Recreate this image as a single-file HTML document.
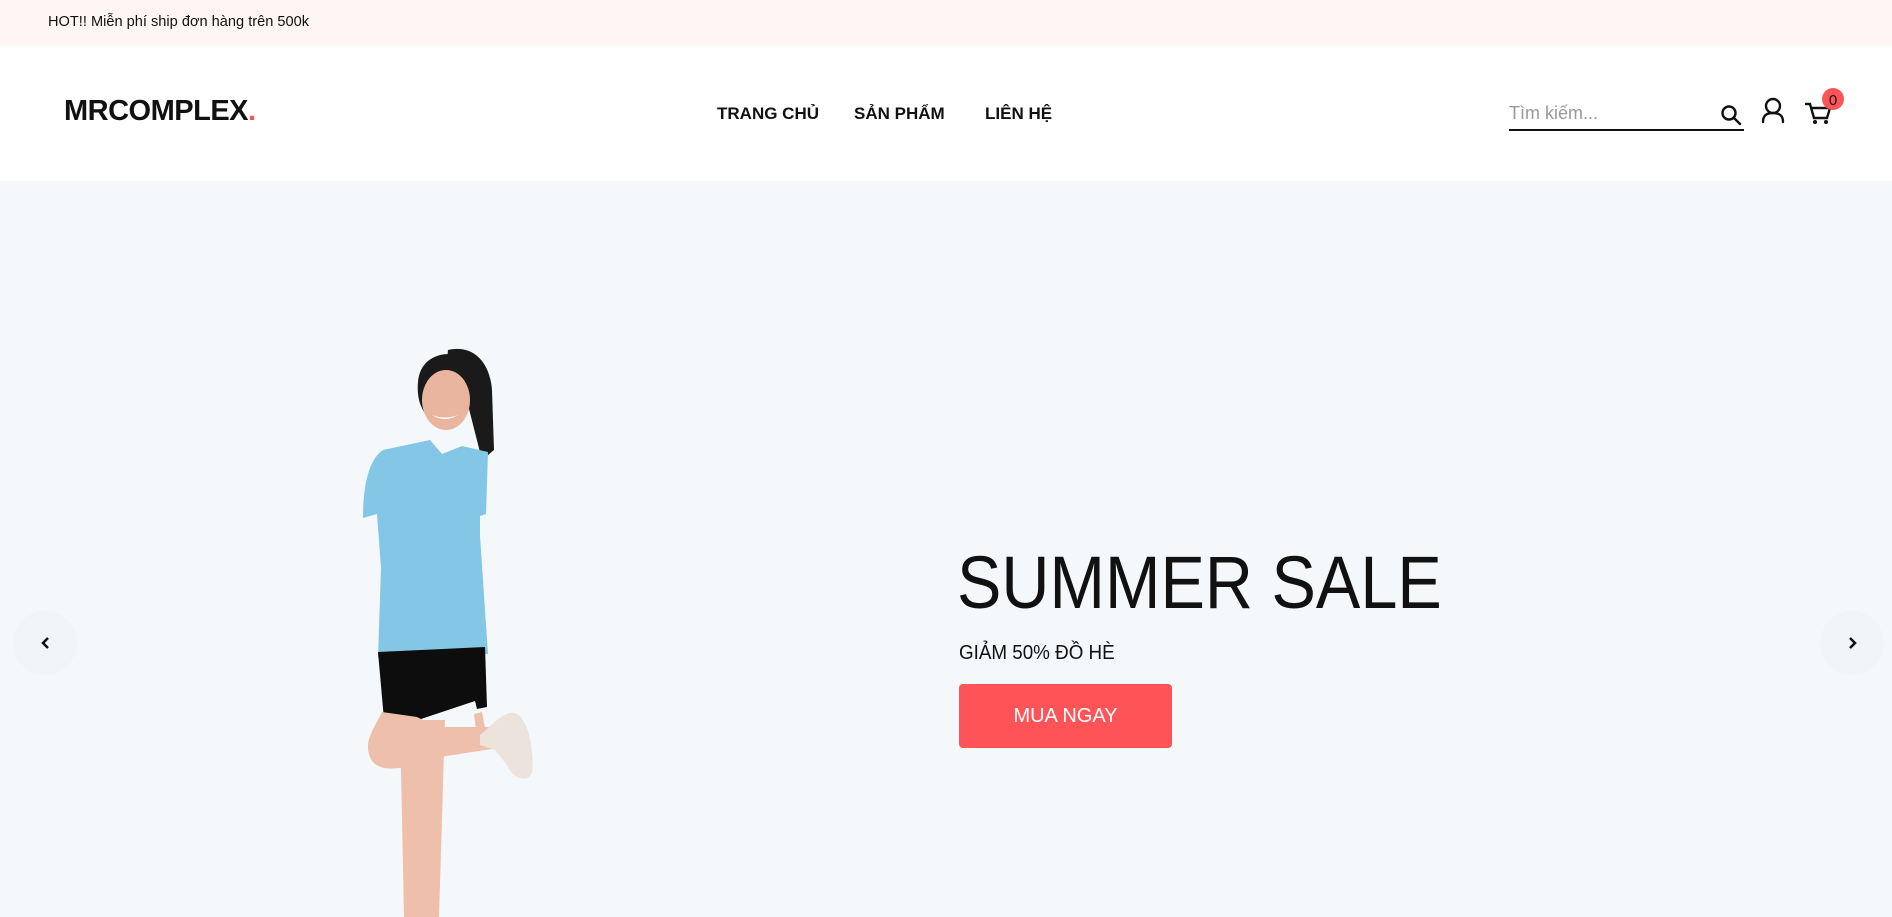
<!DOCTYPE html>
<html><head><meta charset="utf-8">
<style>
*{margin:0;padding:0;box-sizing:border-box}
body{width:1892px;height:917px;overflow:hidden;font-family:"Liberation Sans",sans-serif;background:#f4f8fa;position:relative}
.top{position:absolute;left:0;top:0;width:1892px;height:46px;background:#fff5f4;font-size:14.6px;line-height:44px;padding-left:48px;color:#111}
.hdr{position:absolute;left:0;top:46px;width:1892px;height:135px;background:#fff}
.logo{position:absolute;left:64px;top:95px;font-size:29px;font-weight:bold;color:#111;letter-spacing:-0.5px}
.logo span{color:#ff5457}
.nav a{position:absolute;top:104px;font-size:17px;font-weight:bold;color:#111;text-decoration:none}
.search{position:absolute;left:1509px;top:101px;width:235px;height:30px;border-bottom:2px solid #111;font-size:18px;color:#999;padding-top:2px}
.hero{position:absolute;left:0;top:181px;width:1892px;height:736px;background:#f4f8fa}
h1{position:absolute;left:957px;top:540px;font-size:74px;font-weight:normal;color:#111;letter-spacing:0;transform:scaleX(0.9);transform-origin:0 0;white-space:nowrap}
.sub{position:absolute;left:959px;top:642px;font-size:20px;color:#111;transform:scaleX(0.94);transform-origin:0 0}
.btn{position:absolute;left:959px;top:684px;width:213px;height:64px;background:#ff5457;border-radius:4px;color:#fff;font-size:20px;text-align:center;line-height:64px}
.arr{position:absolute;top:611px;width:64px;height:64px;border-radius:50%;background:#f1f5f7}
</style></head><body>
<div class="top">HOT!! Miễn phí ship đơn hàng trên 500k</div>
<div class="hdr"></div>
<div class="logo">MRCOMPLEX<span>.</span></div>
<div class="nav"><a style="left:717px">TRANG CHỦ</a><a style="left:854px">SẢN PHẨM</a><a style="left:985px">LIÊN HỆ</a></div>
<div class="search">Tìm kiếm...</div>
<svg style="position:absolute;left:0;top:0" width="1892" height="917">
<g fill="none" stroke="#111" stroke-width="2.4" stroke-linecap="round">
<circle cx="1729" cy="113" r="6.5"/><path d="M1734 118l6 6"/>
<circle cx="1773" cy="106" r="7"/><path d="M1763 122c0-7 4-9 10-9s10 2 10 9"/>
<path d="M1806 104h4l4 14h13l3-10h-18"/>
</g>
<circle cx="1815" cy="122" r="2" fill="#111"/><circle cx="1826" cy="122" r="2" fill="#111"/>
<circle cx="1833" cy="99" r="11" fill="#ff5457"/>
<text x="1833" y="105" font-size="15" text-anchor="middle" fill="#111" font-family="Liberation Sans">0</text>
</svg>
<div class="hero"></div>
<div class="arr" style="left:13px"></div><div class="arr" style="left:1820px"></div>
<svg style="position:absolute;left:0;top:0" width="1892" height="917">
<g fill="none" stroke="#111" stroke-width="2.5"><path d="M48 638l-5 5 5 5"/><path d="M1850 638l5 5-5 5"/></g>
<path d="M448 350c25-6 42 12 44 40l2 60-12 10-14-55-25-5z" fill="#1a1a1a"/>
<path d="M418 382c2-25 25-32 44-26 12 6 12 30 8 50-6 20-20 22-32 18-14-6-22-22-20-42z" fill="#1a1a1a"/>
<ellipse cx="446" cy="400" rx="24" ry="30" fill="#eab59f"/>
<path d="M428 377c8-10 30-14 42-4l-4-10c-12-8-30-6-40 6z" fill="#1a1a1a"/>
<path d="M432 415q13 8 26 0q-13 5-26 0z" fill="#fff"/>
<path d="M430 440l12 14 20-8 26 6 -2 62 -6 2 0 20 8 118-110 4 3-90-4-54-14 4c0-30 5-58 20-68z" fill="#84c6e6"/>
<path d="M378 652l107-5 2 60-10 2-2-8-90 30z" fill="#0d0d0d"/>
<path d="M382 712c-10 20-18 30-12 45 8 20 40 10 70 0l65-10-8-20-60 0-20-10z" fill="#eec0ab"/>
<path d="M400 720l45 0-6 197-35 0z" fill="#eec0ab"/>
<path d="M482 712l6 32 -10 2 -4-32z" fill="#eec0ab"/>
<path d="M480 735c10-8 20-20 30-22 18-4 25 40 22 60-4 10-20 6-25-8l-12-15-15-5z" fill="#ece4dc"/>
</svg>
<h1>SUMMER SALE</h1>
<div class="sub">GIẢM 50% ĐỒ HÈ</div>
<div class="btn">MUA NGAY</div>
</body></html>
